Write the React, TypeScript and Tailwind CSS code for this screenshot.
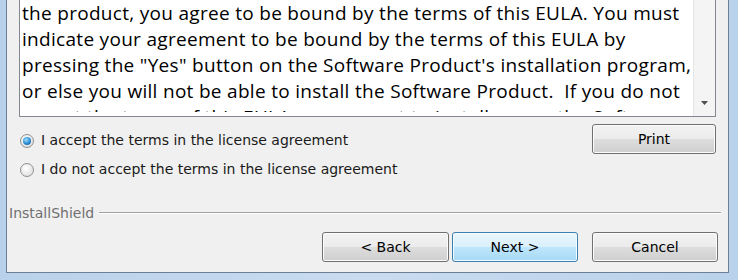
import React from 'react';

const eulaLines = [
  'the product, you agree to be bound by the terms of this EULA. You must',
  'indicate your agreement to be bound by the terms of this EULA by',
  'pressing the "Yes" button on the Software Product\'s installation program,',
  'or else you will not be able to install the Software Product.  If you do not',
  'accept the terms of this EULA, you are not to install or use the Software',
];

function Radio({ checked }: { checked?: boolean }) {
  return (
    <span className="flex h-[14px] w-[14px] items-center justify-center rounded-full border border-[#8e8f8f] bg-[radial-gradient(circle_at_40%_35%,#ffffff,#e3e3e3_70%,#cfcfcf)]">
      {checked && (
        <span className="h-[8px] w-[8px] rounded-full bg-[radial-gradient(circle_at_40%_35%,#9fe0ff,#2b8bd0_55%,#0d4f8c)]" />
      )}
    </span>
  );
}

function WinButton({ label, primary, className = '' }: { label: string; primary?: boolean; className?: string }) {
  const look = primary
    ? 'border-[#3c7fb1] bg-[linear-gradient(#eaf6fd_0%,#d9f0fc_50%,#bee6fd_51%,#a7d9f5_100%)] shadow-[inset_0_0_0_1px_#f4fbff]'
    : 'border-[#707070] bg-[linear-gradient(#f2f2f2_0%,#ebebeb_50%,#dddddd_51%,#cfcfcf_100%)] shadow-[inset_0_0_0_1px_#fcfcfc]';
  return (
    <button
      className={`flex h-[30px] items-center justify-center rounded-[3px] border text-[14px] text-black ${look} ${className}`}
    >
      {label}
    </button>
  );
}

export default function App() {
  return (
    <div className="flex h-[280px] w-[738px] bg-[linear-gradient(90deg,#b9d1ea,#c9dcf0_50%,#b9d1ea)] pb-[7px] pl-[6px] pr-[9px]">
      <div
        className="flex w-[723px] flex-col border-x border-b border-[#6d7f95] bg-[#f0f0f0]"
        style={{ fontFamily: 'Tahoma, "DejaVu Sans", sans-serif' }}
      >
        {/* license text box */}
        <div className="ml-[12px] mr-[12px] flex h-[117px] border-x border-b border-[#828790] bg-white">
          <div
            className="h-[112px] flex-1 overflow-hidden pl-[2px] text-[19px] leading-[26px] tracking-[0.3px] text-black"
            style={{ fontFamily: '"Open Sans", sans-serif' }}
          >
            {eulaLines.map((line) => (
              <div key={line} className="whitespace-pre">
                {line}
              </div>
            ))}
          </div>
          <div className="flex w-[22px] flex-col items-center justify-end border-l border-[#e6e6e6] bg-[#f4f4f4] pb-[11px]">
            <svg width="7" height="4" viewBox="0 0 7 4">
              <path d="M0 0h7L3.5 4z" fill="#4d4d4d" />
            </svg>
          </div>
        </div>

        {/* accept / decline */}
        <div className="mt-[7px] flex pl-[13px] pr-[12px]">
          <div className="flex flex-1 flex-col gap-[12px] pt-[8px] text-[14px] leading-[17px] text-[#1a1a1a]">
            <label className="flex items-center gap-[7px]">
              <Radio checked />
              <span>I accept the terms in the license agreement</span>
            </label>
            <label className="flex items-center gap-[7px]">
              <Radio />
              <span>I do not accept the terms in the license agreement</span>
            </label>
          </div>
          <WinButton label="Print" className="w-[124px]" />
        </div>

        {/* InstallShield separator */}
        <div className="mt-[27px] flex h-[16px] items-center gap-[5px] pl-[2px] pr-[7px]">
          <span className="text-[14px] text-[#707070]">InstallShield</span>
          <div className="h-[2px] flex-1 border-t border-b border-t-[#a0a0a0] border-b-[#ffffff]" />
        </div>

        {/* nav buttons */}
        <div className="mt-[11px] flex justify-end gap-[3px] pr-[10px]">
          <WinButton label="< Back" className="w-[127px]" />
          <WinButton label="Next >" primary className="w-[126px]" />
          <WinButton label="Cancel" className="ml-[11px] w-[126px]" />
        </div>
      </div>
    </div>
  );
}
